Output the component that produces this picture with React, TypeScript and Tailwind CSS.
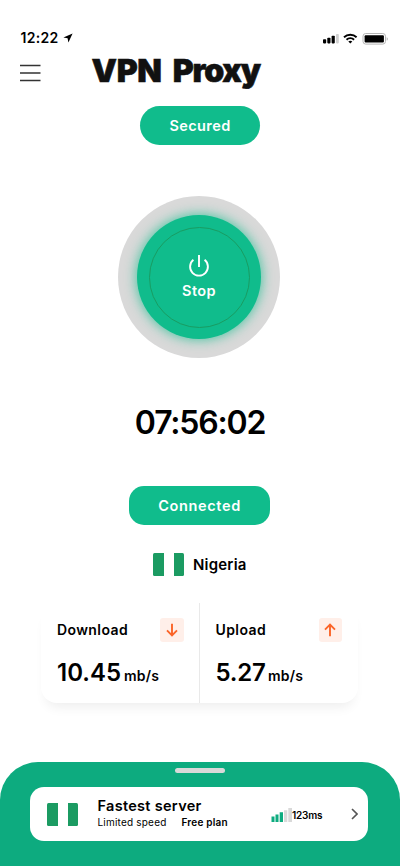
import React from "react";

function Flag({ className = "" }: { className?: string }) {
  return (
    <div className={`flex h-[23px] w-[31px] overflow-hidden rounded-[1.5px] ${className}`}>
      <div className="h-full w-[10.5px] bg-[#1b9b62]" />
      <div className="h-full flex-1 bg-white" />
      <div className="h-full w-[10.5px] bg-[#1b9b62]" />
    </div>
  );
}

function StatusBar() {
  return (
    <div className="flex h-[16px] items-center pl-[20.5px] pr-[12.5px]">
      <span className="w-[39px] whitespace-nowrap text-[14px] leading-[16px] font-semibold tracking-[0.3px]">12:22</span>
      <svg className="ml-[3.5px]" width="10" height="10" viewBox="0 0 10 10">
        <path d="M9.6.4.4 4.6l4.2.6.8 4.4z" fill="#000" />
      </svg>
      <svg className="ml-auto mt-[-1px]" width="65" height="14" viewBox="0 0 65 14">
        <g fill="#000">
          <rect x="0" y="8.2" width="3.2" height="4.2" rx=".8" />
          <rect x="4.3" y="6.8" width="3.2" height="5.6" rx=".8" />
          <rect x="8.6" y="4.8" width="3.2" height="7.6" rx=".8" />
        </g>
        <rect x="13" y="3" width="2.8" height="9.4" rx=".8" fill="#d0d0d0" />
        <g fill="none" stroke="#000" strokeWidth="1.9">
          <path d="M21 6.2a9.2 9.2 0 0 1 12.6 0" />
          <path d="M23.5 8.8a5.6 5.6 0 0 1 7.6 0" />
        </g>
        <path d="M25.3 10.6a3.2 3.2 0 0 1 4 0l-2 2z" fill="#000" />
        <rect x="40" y="2.5" width="22.5" height="10.6" rx="2.7" fill="#fff" stroke="#b5b5b5" />
        <rect x="41.6" y="4.2" width="19.3" height="7.2" rx="1" fill="#000" />
        <path d="M63.7 6.2v3.4c1.4-.5 1.4-2.9 0-3.4" fill="#aaa" />
      </svg>
    </div>
  );
}

function Arrow({ up = false }: { up?: boolean }) {
  return (
    <div className="flex h-[24px] w-[23.5px] items-center justify-center rounded-[3px] bg-[#ffefe9]">
      <svg className={up ? "rotate-180" : ""} width="14" height="14" viewBox="0 0 14 14" fill="none" stroke="#fb6428" strokeWidth="1.9">
        <path d="M7 .8v11.4M2 7.4l5 5 5-5" />
      </svg>
    </div>
  );
}

export default function App() {
  return (
    <div className="flex h-[866px] w-[400px] flex-col overflow-hidden bg-white pt-[30px] font-['Inter',sans-serif] text-black">
      <StatusBar />

      <header className="mt-[7px] flex h-[40px] items-center pl-[20px]">
        <svg className="mt-[-1px]" width="21" height="18" viewBox="0 0 21 18" stroke="#333" strokeWidth="1.6">
          <path d="M0 1.5h20.5M0 9h20.5M0 16.5h20.5" />
        </svg>
        <h1 className="ml-[50.5px] mt-[-4px] flex gap-[11px] whitespace-nowrap text-[32px] leading-[40px] font-black text-[#111] [-webkit-text-stroke:0.6px_#111]">
          <span className="tracking-[-0.3px]">VPN </span>
          <span className="tracking-[-1.2px]">Proxy</span>
        </h1>
      </header>

      <div className="ml-[140px] mt-[13px] flex h-[39px] w-[120px] items-center justify-center rounded-full bg-[#10bc8c] text-[14.5px] font-semibold tracking-[0.4px] text-white">
        Secured
      </div>

      <div className="ml-[118px] mt-[51px] flex size-[162px] shrink-0 items-center justify-center rounded-full bg-[#d9d9d9]">
        <div className="flex size-[124px] items-center justify-center rounded-full bg-[#10bc8c] shadow-[0_0_12px_1px_rgba(16,188,140,0.7)]">
          <div className="flex size-[101px] flex-col items-center rounded-full border border-[#199c62] pt-[26px] text-white">
            <svg width="22" height="24" viewBox="0 0 22 24" fill="none" stroke="#fff" strokeWidth="1.9">
              <path d="M11 1v12M5.4 5.8a8.9 8.9 0 1 0 11.2 0" />
            </svg>
            <span className="mt-[4px] text-[14.5px] leading-[18px] font-semibold tracking-[0.4px]">Stop</span>
          </div>
        </div>
      </div>

      <div className="mt-[44px] h-[42px] text-center text-[32px] leading-[42px] font-semibold tracking-[-1.2px]">07:56:02</div>

      <div className="ml-[129px] mt-[42px] flex h-[38.5px] w-[141px] shrink-0 items-center justify-center rounded-[15px] bg-[#10bc8c] pt-px text-[14.5px] font-semibold tracking-[0.65px] text-white">
        Connected
      </div>

      <div className="mt-[28.5px] flex h-[23px] items-center pl-[153px]">
        <Flag />
        <span className="ml-[9px] mt-px text-[15px] leading-[22px] font-semibold tracking-[0.2px]">Nigeria</span>
      </div>

      <div className="ml-[41px] mt-[27px] flex h-[100px] w-[317px] rounded-[16px] bg-white shadow-[0_9px_12px_-5px_rgba(0,0,0,0.07)]">
        <section className="w-[159px] border-r border-[#e9e9e9] pl-[16px] pr-[15.5px] pt-[15px]">
          <div className="flex items-center justify-between">
            <span className="text-[14px] leading-[20px] font-semibold tracking-[0.4px]">Download</span>
            <Arrow />
          </div>
          <div className="mt-[16px] flex items-baseline whitespace-nowrap leading-[30px]">
            <span className="w-[67px] text-[24px] font-semibold">10.45</span>
            <span className="text-[14px] font-semibold tracking-[0.2px]">mb/s</span>
          </div>
        </section>
        <section className="w-[158px] pl-[15.5px] pr-[16px] pt-[15px]">
          <div className="flex items-center justify-between">
            <span className="text-[14px] leading-[20px] font-semibold tracking-[0.4px]">Upload</span>
            <Arrow up />
          </div>
          <div className="mt-[16px] flex items-baseline whitespace-nowrap leading-[30px]">
            <span className="w-[52.5px] text-[24px] font-semibold tracking-[-0.2px]">5.27</span>
            <span className="text-[14px] font-semibold tracking-[0.2px]">mb/s</span>
          </div>
        </section>
      </div>

      <div className="mt-auto flex h-[104.5px] shrink-0 flex-col rounded-t-[38px] bg-[#0dab7f] pt-[6.5px]">
        <div className="mx-auto h-[5px] w-[50px] rounded-full bg-[#d9d9d9]" />
        <div className="ml-[30px] mt-[14px] flex h-[54px] w-[338px] items-center rounded-[14px] bg-white pl-[17px] pr-[10px]">
          <Flag />
          <div className="ml-[19.5px] mt-[-2px] w-[173.5px]">
            <div className="whitespace-nowrap text-[14.5px] leading-[18px] font-semibold tracking-[0.3px]">Fastest server</div>
            <div className="flex whitespace-nowrap text-[10px] leading-[15px] tracking-[0.2px]">
              <span className="w-[84px]">Limited speed</span>
              <span className="font-semibold">Free plan</span>
            </div>
          </div>
          <svg width="21" height="15" viewBox="0 0 21 15">
            <path d="M.5 9.5h3V15h-3zM4.5 7.5h3V15h-3zM8.7 5.3H12V15H8.7z" fill="#0dab7f" />
            <path d="M13 3.3h3.3V15H13zM17.3 1H21v14h-3.7z" fill="#d9d9d9" />
          </svg>
          <span className="mt-[2px] text-[10px] font-semibold tracking-[-0.2px]">123ms</span>
          <svg className="ml-auto" width="7" height="12" viewBox="0 0 7 12" fill="none" stroke="#555" strokeWidth="1.6">
            <path d="m1 1 5 5-5 5" />
          </svg>
        </div>
      </div>
    </div>
  );
}
